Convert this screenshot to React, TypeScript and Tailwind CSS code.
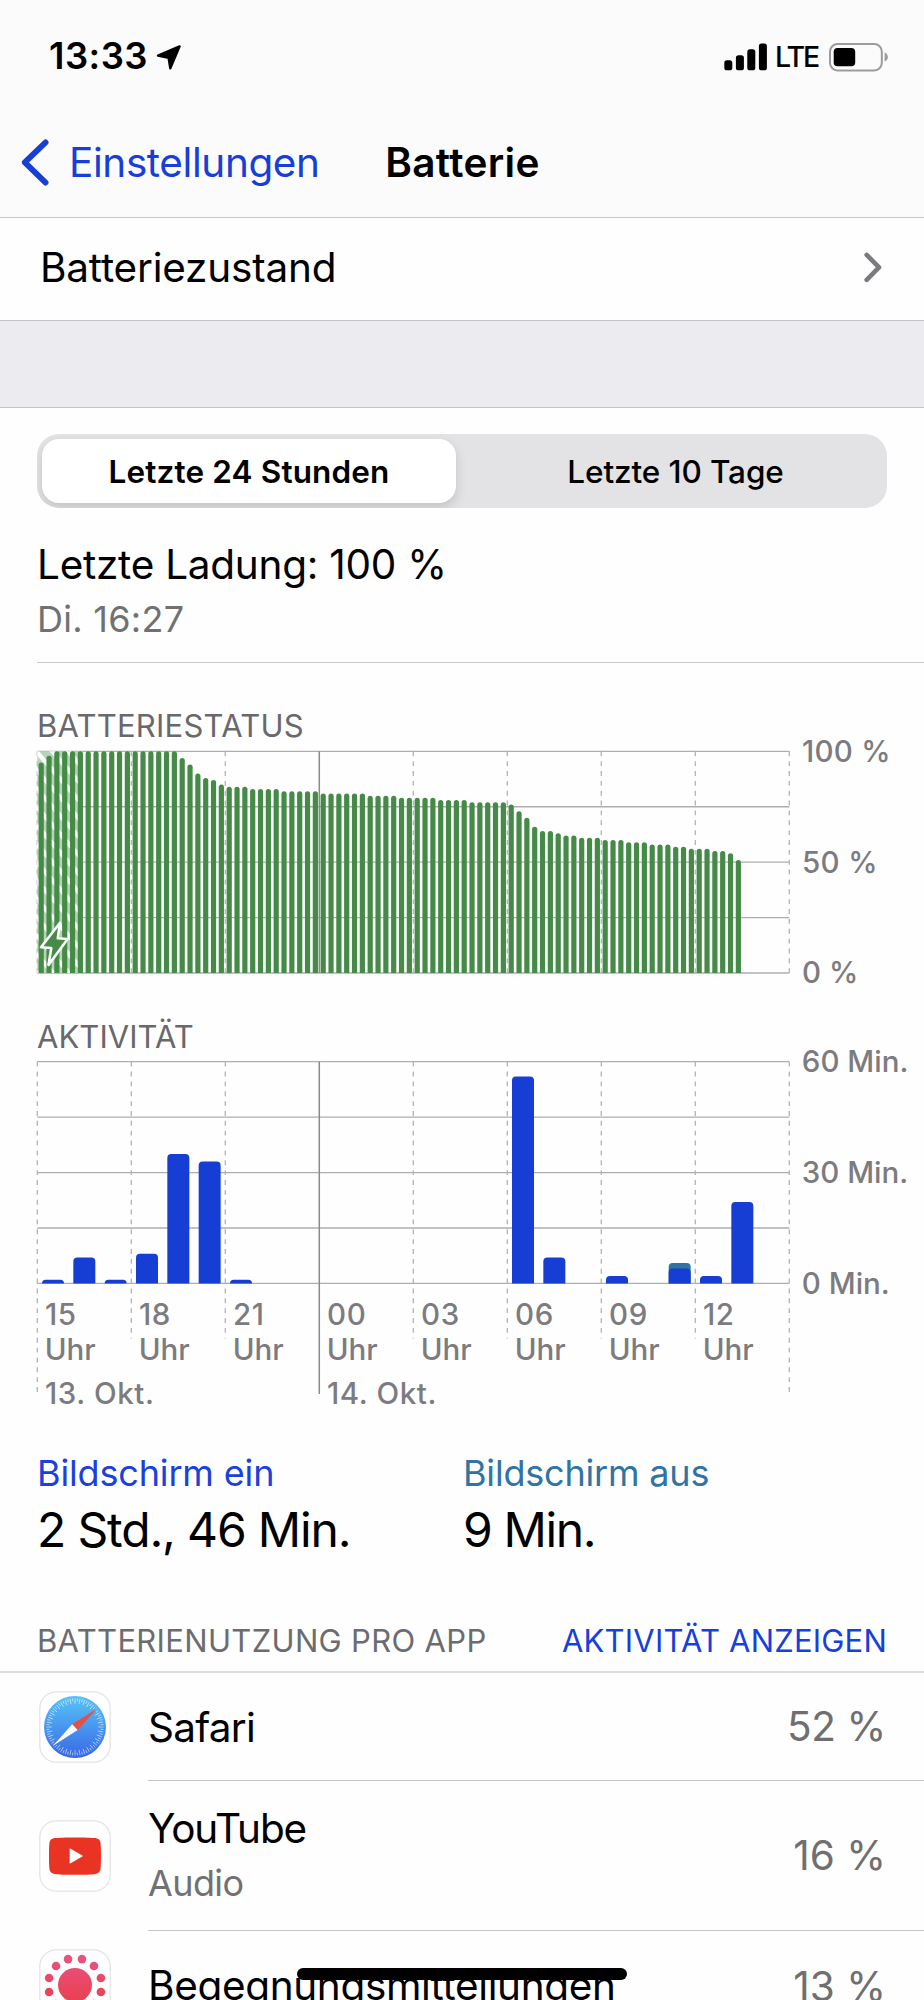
import { ReactNode } from 'react'

const CHART_LEFT = 37.3
const CHART_WIDTH = 752
const PLOT_HEIGHT = 221.7
const COLUMN = CHART_WIDTH / 8

// battery level per quarter of an hour, as [percent, number of bars]
const levelRuns: [number, number][] = [
  [95, 1], [98, 1], [100, 16], [97, 1], [94, 1], [90, 1], [88, 1], [87, 1], [85, 1],
  [84, 3], [83, 4], [82, 5], [81, 6], [80, 4], [79, 5], [78, 4], [77, 5], [76, 1],
  [73, 1], [70, 1], [66, 1], [64, 2], [63, 1], [62, 2], [61, 3], [60, 3], [59, 3],
  [58, 3], [57, 2], [56, 3], [55, 2], [54, 1], [51, 1],
]
const levels = levelRuns.flatMap(([value, count]) => Array<number>(count).fill(value))

// minutes of activity per hour, starting at 15 Uhr
const activity = [
  { hour: 0, on: 1 },
  { hour: 1, on: 7 },
  { hour: 2, on: 1 },
  { hour: 3, on: 8 },
  { hour: 4, on: 35 },
  { hour: 5, on: 33 },
  { hour: 6, on: 1 },
  { hour: 15, on: 56 },
  { hour: 16, on: 7 },
  { hour: 18, on: 2 },
  { hour: 20, on: 4, off: 1.5 },
  { hour: 21, on: 2 },
  { hour: 22, on: 22 },
]

const hours = ['15', '18', '21', '00', '03', '06', '09', '12']

function roundedTop(x: number, y: number, w: number, h: number, radius: number) {
  const r = Math.min(radius, h)
  return `M${x} ${y + h}V${y + r}Q${x} ${y} ${x + r} ${y}H${x + w - r}Q${x + w} ${y} ${x + w} ${y + r}V${y + h}Z`
}

function Grid({ top, tail = 0, dateTail = 0 }: { top: number; tail?: number; dateTail?: number }) {
  const bottom = top + PLOT_HEIGHT
  return (
    <g>
      {[0, 1, 2, 3, 4].map((i) => (
        <line
          key={i}
          x1={CHART_LEFT}
          x2={CHART_LEFT + CHART_WIDTH}
          y1={top + (i * PLOT_HEIGHT) / 4}
          y2={top + (i * PLOT_HEIGHT) / 4}
          stroke="#aeaeb0"
          strokeWidth={1.3}
        />
      ))}
      {[0, 1, 2, 4, 5, 6, 7, 8].map((i) => (
        <line
          key={i}
          x1={CHART_LEFT + i * COLUMN}
          x2={CHART_LEFT + i * COLUMN}
          y1={top}
          y2={bottom + (i === 0 || i === 8 ? dateTail : tail)}
          stroke="#b4b4b6"
          strokeWidth={1.3}
          strokeDasharray="4.9 4.96"
        />
      ))}
    </g>
  )
}

function Midnight({ top, tail = 0 }: { top: number; tail?: number }) {
  const x = CHART_LEFT + 3 * COLUMN
  return <line x1={x} x2={x} y1={top} y2={top + PLOT_HEIGHT + tail} stroke="#8a8a8c" strokeWidth={1.5} />
}

function BatteryChart() {
  const top = 10.3
  const bottom = top + PLOT_HEIGHT
  const step = CHART_WIDTH / 96
  return (
    <svg width={924} height={246} className="block overflow-visible">
      <defs>
        <pattern id="charging" width="16" height="18.4" patternUnits="userSpaceOnUse" x="36" y="10">
          <rect width="16" height="18.4" fill="#b4d5b6" />
          <path d="M-16 -18.4L32 36.8M-16 0L16 36.8M0 -18.4L32 18.4" stroke="#fff" strokeWidth="4.4" />
        </pattern>
      </defs>
      <Grid top={top} />
      <Midnight top={top} />
      <rect x={CHART_LEFT} y={top} width={45} height={PLOT_HEIGHT} fill="url(#charging)" />
      {levels.map((v, i) => {
        const h = (v / 100) * PLOT_HEIGHT
        return <path key={i} d={roundedTop(CHART_LEFT + i * step + 1.3, bottom - h, 5.2, h, 2.6)} fill="#458b47" />
      })}
      <path
        d="M60 181.7L41 206.3L51.3 207L48.5 224L67.6 198L57.8 197.3Z"
        fill="#458b47"
        stroke="#fff"
        strokeWidth="2.6"
        strokeLinejoin="round"
      />
      <g className="fill-[#7b7b80] text-[29.5px] font-medium">
        <text x="801.9" y="21" letterSpacing="0.28">100 %</text>
        <text x="801.9" y="131.6" letterSpacing="0.4">50 %</text>
        <text x="801.9" y="242.4" letterSpacing="0.1">0 %</text>
      </g>
    </svg>
  )
}

function ActivityChart() {
  const top = 9.7
  const bottom = top + PLOT_HEIGHT
  const minute = PLOT_HEIGHT / 60
  return (
    <svg width={924} height={355} className="block overflow-visible">
      <Grid top={top} tail={55} dateTail={109} />
      {activity.map(({ hour, on, off = 0 }) => {
        const x = CHART_LEFT + (hour * CHART_WIDTH) / 24 + 4.7
        const total = (on + off) * minute
        return (
          <g key={hour}>
            {off > 0 && <path d={roundedTop(x, bottom - total, 22, total, 4)} fill="#2f74a3" />}
            <path d={roundedTop(x, bottom - on * minute, 22, on * minute, 4)} fill="#163ed4" />
          </g>
        )
      })}
      <Midnight top={top} tail={110.5} />
      <g className="fill-[#7b7b80] text-[29.5px] font-medium">
        <text x="801.8" y="20">60 Min.</text>
        <text x="801.8" y="130.8">30 Min.</text>
        <text x="801.8" y="241.8">0 Min.</text>
        {hours.map((h, i) => (
          <g key={h}>
            <text x={CHART_LEFT + i * COLUMN + 7.7} y="273" letterSpacing="0.6">{h}</text>
            <text x={CHART_LEFT + i * COLUMN + 7.4} y="308">Uhr</text>
          </g>
        ))}
        <text x="45" y="352.3" letterSpacing="0.6">13. Okt.</text>
        <text x="327" y="352.3" letterSpacing="0.6">14. Okt.</text>
      </g>
    </svg>
  )
}

function AppTile({ children }: { children: ReactNode }) {
  return (
    <svg width={72} height={72} viewBox="0 0 72 72" className="mr-[37px] shrink-0">
      <rect x="0.8" y="0.8" width="70.4" height="70.4" rx="16.5" fill="#fff" stroke="#e4e4e4" strokeWidth="1.3" />
      {children}
    </svg>
  )
}

function SafariIcon() {
  return (
    <AppTile>
      <defs>
        <linearGradient id="safari" x1="0" y1="0" x2="0" y2="1">
          <stop offset="0" stopColor="#58c3f5" />
          <stop offset="0.5" stopColor="#4797ef" />
          <stop offset="1" stopColor="#3a66e6" />
        </linearGradient>
      </defs>
      <circle cx="36" cy="36" r="31" fill="url(#safari)" />
      {Array.from({ length: 72 }, (_, i) => (
        <line
          key={i}
          x1="36"
          x2="36"
          y1="7.4"
          y2={i % 2 ? 10.4 : 12.8}
          stroke="#fff"
          strokeOpacity="0.75"
          strokeWidth="0.7"
          transform={`rotate(${i * 5} 36 36)`}
        />
      ))}
      <path d="M58.2 17.4L33.2 33.2L38.6 39Z" fill="#ea4e3d" />
      <path d="M14 54.8L33.2 33.2L38.6 39Z" fill="#fff" />
    </AppTile>
  )
}

function YouTubeIcon() {
  return (
    <AppTile>
      <path
        d="M36 17.4C45 17.4 53 17.6 56.5 18.1C60 18.6 61.4 20.6 61.7 24C62.1 31 62.1 41 61.7 48C61.4 51.4 60 53.4 56.5 53.9C53 54.6 45 54.8 36 54.8C27 54.8 19 54.6 15.5 53.9C12 53.4 10.6 51.4 10.3 48C9.9 41 9.9 31 10.3 24C10.6 20.6 12 18.6 15.5 18.1C19 17.6 27 17.4 36 17.4Z"
        fill="#e93323"
      />
      <path d="M30.7 28.3L44.2 36L30.7 43.7Z" fill="#fff" />
    </AppTile>
  )
}

function ExposureIcon() {
  return (
    <AppTile>
      <defs>
        <linearGradient id="exposure" x1="0" y1="5" x2="0" y2="67" gradientUnits="userSpaceOnUse">
          <stop offset="0" stopColor="#e75586" />
          <stop offset="0.5" stopColor="#ea4662" />
          <stop offset="1" stopColor="#e93a44" />
        </linearGradient>
      </defs>
      <g fill="url(#exposure)">
        <circle cx="36" cy="36" r="17" />
        {Array.from({ length: 12 }, (_, i) => {
          const a = ((15 + i * 30) * Math.PI) / 180
          return <circle key={i} cx={36 + 26.8 * Math.sin(a)} cy={36 - 26.8 * Math.cos(a)} r="4.3" />
        })}
      </g>
    </AppTile>
  )
}

function StatusBar() {
  return (
    <div className="flex h-[113px] items-center">
      <div className="pl-[49px] text-[36.5px] font-semibold tracking-[0.45px]">13:33</div>
      <svg width={28} height={28} viewBox="155 42 28 28" className="ml-[7px]">
        <path
          d="M179.6 45.4L158 54.6L168.6 56.8L170.3 67.4Z"
          stroke="#000"
          strokeWidth="2.4"
          strokeLinejoin="round"
        />
      </svg>
      <svg width={44} height={28} viewBox="0 0 44 28" className="ml-auto">
        <rect x="0.3" y="17.3" width="8" height="10" rx="2.6" />
        <rect x="11.9" y="12.2" width="8" height="15.1" rx="2.6" />
        <rect x="23.3" y="6.3" width="8" height="21" rx="2.6" />
        <rect x="34.9" y="0.5" width="8" height="26.8" rx="2.6" />
      </svg>
      <div className="ml-[7px] w-[47px] pt-[2px] text-[28.5px] font-medium tracking-[-2px]">LTE</div>
      <svg width={62} height={30} viewBox="0 0 62 30" className="mr-[34px] ml-[6px]">
        <rect x="2" y="2" width="51.8" height="26.4" rx="7.5" fill="none" stroke="#9c9c9c" strokeWidth="2" />
        <rect x="5.7" y="6" width="21.5" height="18.3" rx="3.8" />
        <path d="M56.6 10.6C61 12.4 61 18 56.6 19.8Z" fill="#9c9c9c" />
      </svg>
    </div>
  )
}

function NavBar() {
  return (
    <div className="grid h-[100px] grid-cols-[1fr_auto_1fr] items-center text-[40.5px]">
      <div className="flex items-center text-[#173fd8]">
        <svg width={30} height={48} viewBox="0 0 30 48" className="ml-[20px]">
          <path d="M25.6 3.4L4.8 23.4L25.6 43.6" fill="none" stroke="currentColor" strokeWidth="5.8" strokeLinecap="round" strokeLinejoin="round" />
        </svg>
        <span className="ml-[19px] tracking-[-0.4px]">Einstellungen</span>
      </div>
      <div className="pl-[1px] font-semibold tracking-[0.34px]">Batterie</div>
    </div>
  )
}

function SectionTitle({ children }: { children: ReactNode }) {
  return <div className="h-8 pl-[37px] text-[31px] leading-[34px] text-[#68686d]">{children}</div>
}

function AppRow({ icon, percent, children, last }: { icon: ReactNode; percent: ReactNode; children: ReactNode; last?: boolean }) {
  return (
    <div className="flex shrink-0 items-center pl-[39px]">
      {icon}
      <div className={last ? 'flex h-[108px] flex-1 items-center pt-[2px]' : 'flex flex-1 items-center border-b border-[#c6c6c8]'}>
        <div className="flex-1">{children}</div>
        <div className="pt-[2px] pr-[38px] text-[#6f6f72]">{percent}</div>
      </div>
    </div>
  )
}

export default function App() {
  return (
    <div className="relative flex h-[2000px] w-[924px] flex-col overflow-hidden bg-[#fefefe] font-['Inter','Liberation_Sans',sans-serif] text-black">
      <header className="h-[218px] shrink-0 border-b border-[#c6c6c8] bg-[#fbfbfc]">
        <StatusBar />
        <NavBar />
      </header>

      <div className="flex h-[103px] shrink-0 items-center justify-between border-b border-[#c3c3c6] pr-[41px] pb-[2px] pl-[40px]">
        <span className="tracking-[-0.2px] text-[40.5px]">Batteriezustand</span>
        <svg width={20} height={32} viewBox="0 0 20 32">
          <path d="M3.7 2.9L16 15.4L3.7 27.9" fill="none" stroke="#7a7a7f" strokeWidth="4.6" strokeLinecap="round" strokeLinejoin="round" />
        </svg>
      </div>
      <div className="h-[87px] shrink-0 border-b border-[#c3c3c8] bg-[#ebebf0]" />

      <div className="mt-[26px] ml-[37px] flex h-[74px] w-[850px] shrink-0 overflow-hidden rounded-[22px] bg-[#e3e3e5] p-[5px] text-[31.5px]">
        <div className="flex w-[414px] items-center justify-center rounded-[17px] bg-white pt-[1px] font-semibold tracking-[0.15px] shadow-[0_5px_12px_rgba(0,0,0,0.14)]">
          Letzte 24 Stunden
        </div>
        <div className="flex flex-1 items-center justify-center pt-[1px] pl-[13px] font-medium tracking-[-0.11px]">Letzte 10 Tage</div>
      </div>

      <div className="ml-[37px] h-[155px] shrink-0 border-b border-[#c9c9cb] pt-[30px]">
        <div className="h-[54px] text-[40.5px] leading-[54px] tracking-[-0.26px]">Letzte Ladung: 100 %</div>
        <div className="h-[54px] text-[36px] leading-[54px] tracking-[0.28px] text-[#717173]">Di. 16:27</div>
      </div>

      <section className="mt-[46px] shrink-0">
        <SectionTitle>
          <span className="tracking-[0.23px]">BATTERIESTATUS</span>
        </SectionTitle>
        <BatteryChart />
      </section>

      <section className="mt-[33px] shrink-0">
        <SectionTitle>
          <span className="tracking-[0.05px]">AKTIVITÄT</span>
        </SectionTitle>
        <ActivityChart />
      </section>

      <div className="mt-[44px] flex h-[108px] shrink-0 pl-[37px]">
        <div className="w-[426px]">
          <div className="h-[44px] text-[36px] leading-[44px] tracking-[-0.15px] text-[#1b40dc]">Bildschirm ein</div>
          <div className="mt-[4px] h-[60px] text-[48px] leading-[62px] tracking-[-1.16px]">2 Std., 46 Min.</div>
        </div>
        <div>
          <div className="h-[44px] text-[36px] leading-[44px] tracking-[-0.19px] text-[#2f74a3]">Bildschirm aus</div>
          <div className="mt-[4px] h-[60px] text-[48px] leading-[62px] tracking-[-1.38px]">9 Min.</div>
        </div>
      </div>

      <div className="mt-[65px] flex h-[49px] shrink-0 justify-between border-b-2 border-[#dddddf] pr-[37px] pl-[37px] text-[31px] leading-[34px]">
        <span className="tracking-[0.33px] text-[#6c6c70]">BATTERIENUTZUNG PRO APP</span>
        <span className="tracking-[0.2px] text-[#173fdb]">AKTIVITÄT ANZEIGEN</span>
      </div>

      <div className="flex flex-col text-[40.5px]">
        <AppRow icon={<SafariIcon />} percent={<span className="tracking-[-0.4px]">52 %</span>}>
          <div className="h-[107px] leading-[110px] tracking-[-0.74px]">Safari</div>
        </AppRow>
        <AppRow icon={<YouTubeIcon />} percent="16 %">
          <div className="h-[149px] pt-[21px]">
            <div className="h-[54px] leading-[54px] tracking-[-1.15px]">YouTube</div>
            <div className="h-[54px] text-[36px] leading-[54px] tracking-[-0.6px] text-[#717173]">Audio</div>
          </div>
        </AppRow>
        <AppRow icon={<ExposureIcon />} percent="13 %" last>
          <div className="tracking-[-0.35px]">Begegnungsmitteilungen</div>
        </AppRow>
      </div>

      {/* home indicator */}
      <div className="absolute top-[1968px] left-[297px] h-[12px] w-[330px] rounded-full bg-black" />
    </div>
  )
}
